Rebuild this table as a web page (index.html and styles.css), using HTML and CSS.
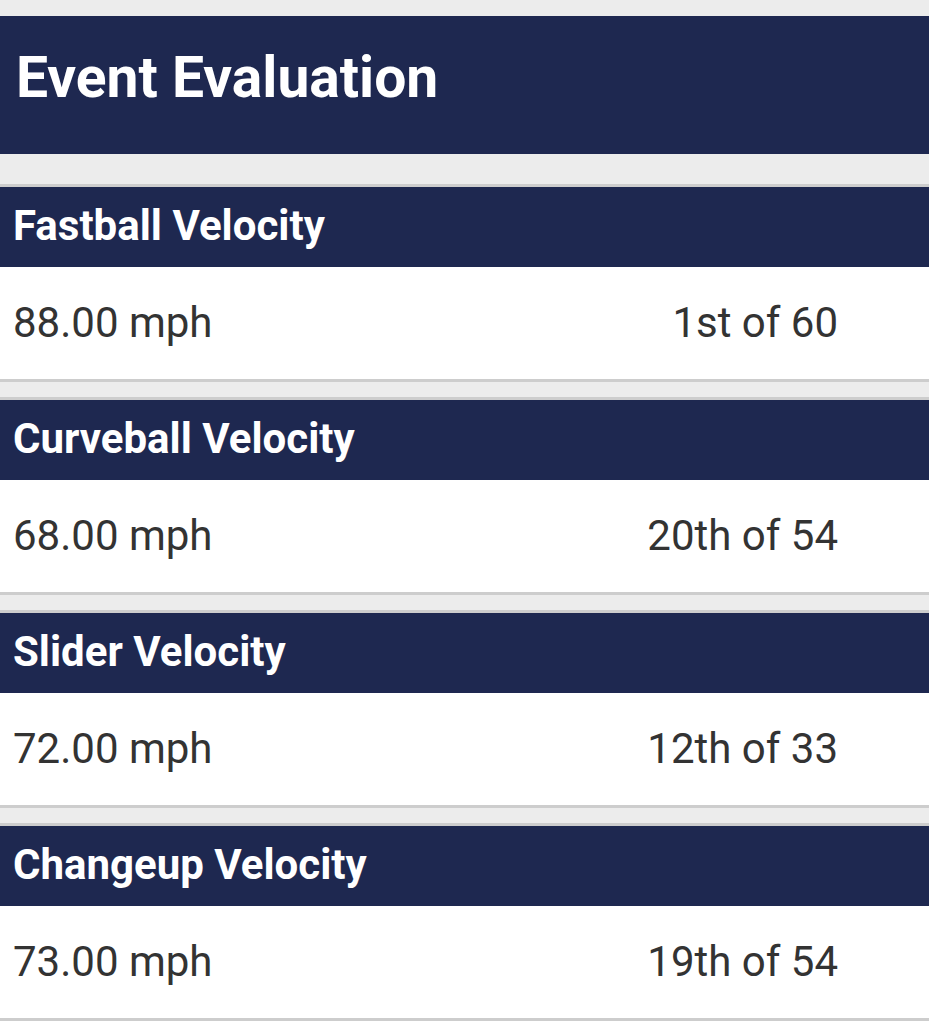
FILE: index.html
```html
<!DOCTYPE html>
<html>
<head>
<meta charset="utf-8">
<link rel="stylesheet" href="styles.css">
</head>
<body>
<div class="page">
  <div class="title-bar"><h1 class="title">Event Evaluation</h1></div>
  <div class="sections">
    <section class="card">
      <div class="card-head">Fastball Velocity</div>
      <div class="card-body"><span class="value">88.00 mph</span><span class="rank">1st of 60</span></div>
    </section>
    <section class="card">
      <div class="card-head">Curveball Velocity</div>
      <div class="card-body"><span class="value">68.00 mph</span><span class="rank">20th of 54</span></div>
    </section>
    <section class="card">
      <div class="card-head">Slider Velocity</div>
      <div class="card-body"><span class="value">72.00 mph</span><span class="rank">12th of 33</span></div>
    </section>
    <section class="card">
      <div class="card-head">Changeup Velocity</div>
      <div class="card-body"><span class="value">73.00 mph</span><span class="rank">19th of 54</span></div>
    </section>
  </div>
</div>
</body>
</html>
```
FILE: styles.css
```css
html, body {
  margin: 0;
  padding: 0;
  background: #ececec;
  font-family: Roboto, "Liberation Sans", sans-serif;
}
.page {
  padding-top: 16px;
}
.title-bar {
  background: #1e2850;
  height: 138px;
  display: flex;
  align-items: center;
  padding: 0 16px 16px;
  box-sizing: border-box;
}
.title {
  margin: 0;
  color: #fff;
  font-size: 57px;
  font-weight: 700;
  letter-spacing: 0;
}
.sections {
  display: flex;
  flex-direction: column;
  gap: 15px;
  padding-top: 30px;
}
.card {
  border-top: 3px solid #cdcdcd;
  border-bottom: 3px solid #cdcdcd;
  background: #fff;
}
.card-head {
  background: #1e2850;
  color: #fff;
  height: 80px;
  display: flex;
  align-items: center;
  padding: 0 13px 4px;
  box-sizing: border-box;
  font-size: 42px;
  font-weight: 700;
}
.card-body {
  height: 112px;
  display: flex;
  align-items: center;
  justify-content: space-between;
  padding: 0 91px 2px 13px;
  box-sizing: border-box;
  color: #333;
  font-size: 42px;
}
```
